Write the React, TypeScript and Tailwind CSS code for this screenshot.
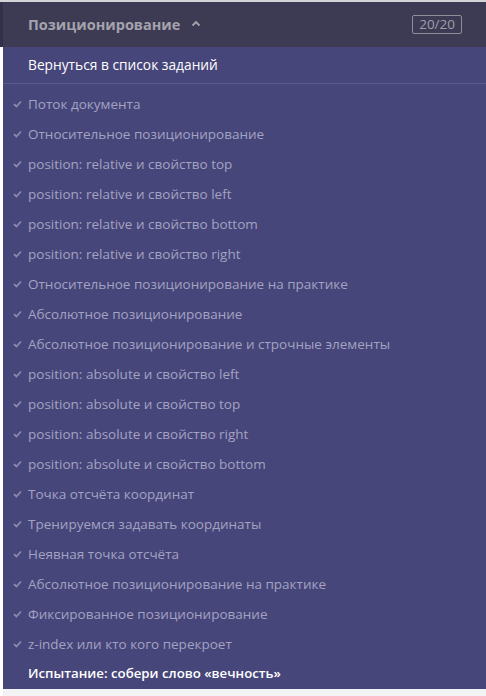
import React from "react";

const items = [
  "Поток документа",
  "Относительное позиционирование",
  "position: relative и свойство top",
  "position: relative и свойство left",
  "position: relative и свойство bottom",
  "position: relative и свойство right",
  "Относительное позиционирование на практике",
  "Абсолютное позиционирование",
  "Абсолютное позиционирование и строчные элементы",
  "position: absolute и свойство left",
  "position: absolute и свойство top",
  "position: absolute и свойство right",
  "position: absolute и свойство bottom",
  "Точка отсчёта координат",
  "Тренируемся задавать координаты",
  "Неявная точка отсчёта",
  "Абсолютное позиционирование на практике",
  "Фиксированное позиционирование",
  "z-index или кто кого перекроет",
];

function Check() {
  return (
    <svg width="9" height="8" viewBox="0 0 9 8" className="shrink-0">
      <path d="M1 4.2 L3.4 6.5 L8 1.5" fill="none" stroke="#8c8ab0" strokeWidth="1.8" />
    </svg>
  );
}

export default function App() {
  return (
    <div
      className="w-[486px] h-[696px] bg-[#f3f3f5] flex flex-col overflow-hidden"
      style={{ fontFamily: '"Open Sans", "Noto Sans", sans-serif' }}
    >
      <div className="h-[2px] bg-[#d4d4d8] shrink-0" />
      <div className="flex flex-1 min-h-0">
        <div className="w-[3px] flex flex-col shrink-0">
          <div className="h-[45px] bg-[#33314a]" />
          <div className="flex-1 bg-white" />
        </div>
        <div className="flex-1 flex flex-col">
          <div className="h-[45px] bg-[#3d3b54] flex items-center pl-[25px] pr-[24px]">
            <span className="text-[14.5px] font-bold text-[#a4a3ad]">Позиционирование</span>
            <svg width="10" height="7" viewBox="0 0 10 7" className="ml-[11px] mb-[3px]">
              <path d="M1.5 5.5 L5 2 L8.5 5.5" fill="none" stroke="#a4a3ad" strokeWidth="1.8" />
            </svg>
            <span className="ml-auto h-[19px] px-[6px] border border-[#8e8d99] rounded-[2px] text-[13.5px] leading-[17px] text-[#9f9eaa]">
              20/20
            </span>
          </div>
          <div className="bg-[#47467a] flex flex-col">
            <div className="h-[37px] flex items-center pl-[25px] border-b border-[#5c5b8a]">
              <span className="text-[13.75px] text-white">Вернуться в список заданий</span>
            </div>
            <div className="flex flex-col pt-[5px]">
              {items.map((t) => (
                <div key={t} className="h-[30px] flex items-center pl-[10px] gap-[6px]">
                  <Check />
                  <span className="text-[13.5px] text-[#a3a2c2] whitespace-nowrap">{t}</span>
                </div>
              ))}
              <div className="h-[30px] flex items-center pl-[25px]">
                <span className="text-[13.25px] font-semibold text-white">Испытание: собери слово «вечность»</span>
              </div>
            </div>
          </div>
        </div>
      </div>
    </div>
  );
}
